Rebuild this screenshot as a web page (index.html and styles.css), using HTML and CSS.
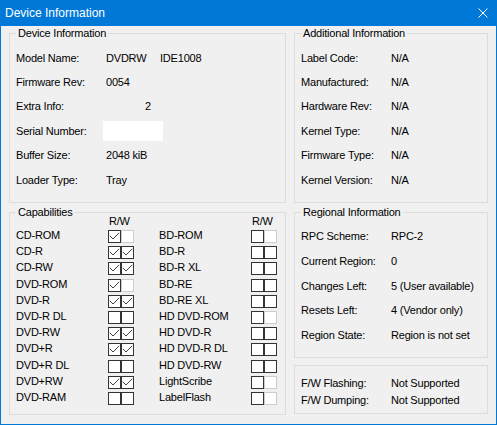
FILE: index.html
```html
<!DOCTYPE html>
<html>
<head>
<meta charset="utf-8">
<link rel="stylesheet" href="styles.css">
</head>
<body>
<div class="window">
  <div class="titlebar">
    <span class="title">Device Information</span>
    <svg class="close" width="10" height="10" viewBox="0 0 10 10"><path d="M0.5 0.5 L9.5 9.5 M9.5 0.5 L0.5 9.5" stroke="#fff" stroke-width="1" fill="none"/></svg>
  </div>
  <div class="content">
    <div class="col col-left">
      <fieldset class="group group-dev">
        <legend>Device Information</legend>
        <div class="row"><span class="lbl">Model Name:</span><span class="val"><span class="model">DVDRW</span><span>IDE1008</span></span></div>
        <div class="row"><span class="lbl">Firmware Rev:</span><span class="val">0054</span></div>
        <div class="row"><span class="lbl">Extra Info:</span><span class="val val-extra">2</span></div>
        <div class="row"><span class="lbl">Serial Number:</span><span class="val"><span class="serial"></span></span></div>
        <div class="row"><span class="lbl">Buffer Size:</span><span class="val">2048 kiB</span></div>
        <div class="row"><span class="lbl">Loader Type:</span><span class="val">Tray</span></div>
      </fieldset>
      <fieldset class="group group-caps">
        <legend>Capabilities</legend>
        <div class="caps">
          <div class="capcol">
            <div class="caphead"><span></span><span class="rw">R/W</span></div>
            <div class="cap"><span>CD-ROM</span><span class="pair"><i class="cb on"></i><i class="cb dis"></i></span></div>
            <div class="cap"><span>CD-R</span><span class="pair"><i class="cb on"></i><i class="cb on"></i></span></div>
            <div class="cap"><span>CD-RW</span><span class="pair"><i class="cb on"></i><i class="cb on"></i></span></div>
            <div class="cap"><span>DVD-ROM</span><span class="pair"><i class="cb on"></i><i class="cb dis"></i></span></div>
            <div class="cap"><span>DVD-R</span><span class="pair"><i class="cb on"></i><i class="cb on"></i></span></div>
            <div class="cap"><span>DVD-R DL</span><span class="pair"><i class="cb"></i><i class="cb"></i></span></div>
            <div class="cap"><span>DVD-RW</span><span class="pair"><i class="cb on"></i><i class="cb on"></i></span></div>
            <div class="cap"><span>DVD+R</span><span class="pair"><i class="cb on"></i><i class="cb on"></i></span></div>
            <div class="cap"><span>DVD+R DL</span><span class="pair"><i class="cb"></i><i class="cb"></i></span></div>
            <div class="cap"><span>DVD+RW</span><span class="pair"><i class="cb on"></i><i class="cb on"></i></span></div>
            <div class="cap"><span>DVD-RAM</span><span class="pair"><i class="cb"></i><i class="cb"></i></span></div>
          </div>
          <div class="capcol">
            <div class="caphead"><span></span><span class="rw">R/W</span></div>
            <div class="cap"><span>BD-ROM</span><span class="pair"><i class="cb"></i><i class="cb dis"></i></span></div>
            <div class="cap"><span>BD-R</span><span class="pair"><i class="cb"></i><i class="cb"></i></span></div>
            <div class="cap"><span>BD-R XL</span><span class="pair"><i class="cb"></i><i class="cb"></i></span></div>
            <div class="cap"><span>BD-RE</span><span class="pair"><i class="cb"></i><i class="cb"></i></span></div>
            <div class="cap"><span>BD-RE XL</span><span class="pair"><i class="cb"></i><i class="cb"></i></span></div>
            <div class="cap"><span>HD DVD-ROM</span><span class="pair"><i class="cb"></i><i class="cb dis"></i></span></div>
            <div class="cap"><span>HD DVD-R</span><span class="pair"><i class="cb"></i><i class="cb"></i></span></div>
            <div class="cap"><span>HD DVD-R DL</span><span class="pair"><i class="cb"></i><i class="cb"></i></span></div>
            <div class="cap"><span>HD DVD-RW</span><span class="pair"><i class="cb"></i><i class="cb"></i></span></div>
            <div class="cap"><span>LightScribe</span><span class="pair"><i class="cb"></i><i class="cb dis"></i></span></div>
            <div class="cap"><span>LabelFlash</span><span class="pair"><i class="cb"></i><i class="cb dis"></i></span></div>
          </div>
        </div>
      </fieldset>
    </div>
    <div class="col col-right">
      <fieldset class="group group-add">
        <legend>Additional Information</legend>
        <div class="row"><span class="lbl">Label Code:</span><span class="val">N/A</span></div>
        <div class="row"><span class="lbl">Manufactured:</span><span class="val">N/A</span></div>
        <div class="row"><span class="lbl">Hardware Rev:</span><span class="val">N/A</span></div>
        <div class="row"><span class="lbl">Kernel Type:</span><span class="val">N/A</span></div>
        <div class="row"><span class="lbl">Firmware Type:</span><span class="val">N/A</span></div>
        <div class="row"><span class="lbl">Kernel Version:</span><span class="val">N/A</span></div>
      </fieldset>
      <fieldset class="group group-reg">
        <legend>Regional Information</legend>
        <div class="row row-reg"><span class="lbl">RPC Scheme:</span><span class="val">RPC-2</span></div>
        <div class="row row-reg"><span class="lbl">Current Region:</span><span class="val">0</span></div>
        <div class="row row-reg"><span class="lbl">Changes Left:</span><span class="val">5 (User available)</span></div>
        <div class="row row-reg"><span class="lbl">Resets Left:</span><span class="val">4 (Vendor only)</span></div>
        <div class="row row-reg"><span class="lbl">Region State:</span><span class="val">Region is not set</span></div>
      </fieldset>
      <div class="group group-fw">
        <div class="row row-fw"><span class="lbl">F/W Flashing:</span><span class="val">Not Supported</span></div>
        <div class="row row-fw"><span class="lbl">F/W Dumping:</span><span class="val">Not Supported</span></div>
      </div>
    </div>
  </div>
</div>
</body>
</html>
```
FILE: styles.css
```css
* { box-sizing: border-box; }
html, body { margin: 0; padding: 0; background: #f0f0f0; }
body {
  font-family: "Liberation Sans", Arial, sans-serif;
  font-size: 11px;
  color: #000;
  letter-spacing: -0.2px;
}
.window {
  width: 497px;
  height: 425px;
  background: #f0f0f0;
  border: 1px solid #0078d7;
  border-top: 0;
  overflow: hidden;
}
.titlebar {
  height: 26px;
  background: #0078d7;
  color: #fff;
  display: flex;
  align-items: center;
  justify-content: space-between;
  padding: 0 8px 0 4px;
}
.title {
  font-size: 12px;
  letter-spacing: 0;
  line-height: 26px;
}
.close { display: block; }
.content {
  display: flex;
  gap: 8px;
  padding: 0 8px;
}
.col { display: flex; flex-direction: column; }
.col-left { width: 277px; }
.col-right { width: 194px; }
.group {
  margin: 0;
  border: 1px solid #dcdcdc;
  padding: 0 6px;
  min-width: 0;
}
.group legend {
  padding: 0 2px;
  line-height: 13px;
  font-size: 11px;
}
.group-dev, .group-add {
  margin-top: 1px;
  height: 176px;
  padding-top: 6px;
}
.group-caps {
  margin-top: 3px;
  height: 209px;
}
.group-reg {
  margin-top: 3px;
  height: 152px;
  padding-top: 5.6px;
}
.group-fw {
  margin-top: 7px;
  height: 49px;
  padding-top: 8.6px;
}
.row {
  display: flex;
  align-items: center;
  height: 24.4px;
  line-height: 13px;
  white-space: nowrap;
}
.row-reg { height: 24.6px; }
.row-fw { height: 17.3px; }
.lbl { width: 90px; flex: none; }
.val { display: flex; align-items: center; }
.model { display: inline-block; width: 54px; }
.val-extra { padding-left: 39px; }
.serial {
  display: block;
  width: 60px;
  height: 20px;
  background: #fff;
  margin-left: -3px;
}
.caps {
  display: flex;
  gap: 25px;
}
.capcol { display: flex; flex-direction: column; }
.caphead {
  display: flex;
  height: 11px;
  line-height: 11px;
  margin-top: -3px;
}
.caphead span:first-child { width: 92px; }
.rw { padding-left: 1px; }
.cap {
  display: flex;
  align-items: flex-start;
  height: 16.2px;
  line-height: 16.2px;
  white-space: nowrap;
}
.cap > span:first-child { width: 92px; flex: none; }
.pair {
  display: flex;
  margin-top: 3px;
}
.cb {
  display: block;
  width: 13px;
  height: 13px;
  border: 1px solid #333;
  background: #fff;
  position: relative;
}
.cb.dis { border-color: #cccccc; }
.cb.on::after {
  content: "";
  position: absolute;
  left: 0;
  top: 0;
  width: 11px;
  height: 11px;
  background: url("data:image/svg+xml;utf8,<svg xmlns='http://www.w3.org/2000/svg' width='11' height='11' viewBox='0 0 11 11'><polyline points='0.8,4.8 4,8 10.2,1.8' fill='none' stroke='%23444' stroke-width='1'/></svg>") no-repeat;
}
```
